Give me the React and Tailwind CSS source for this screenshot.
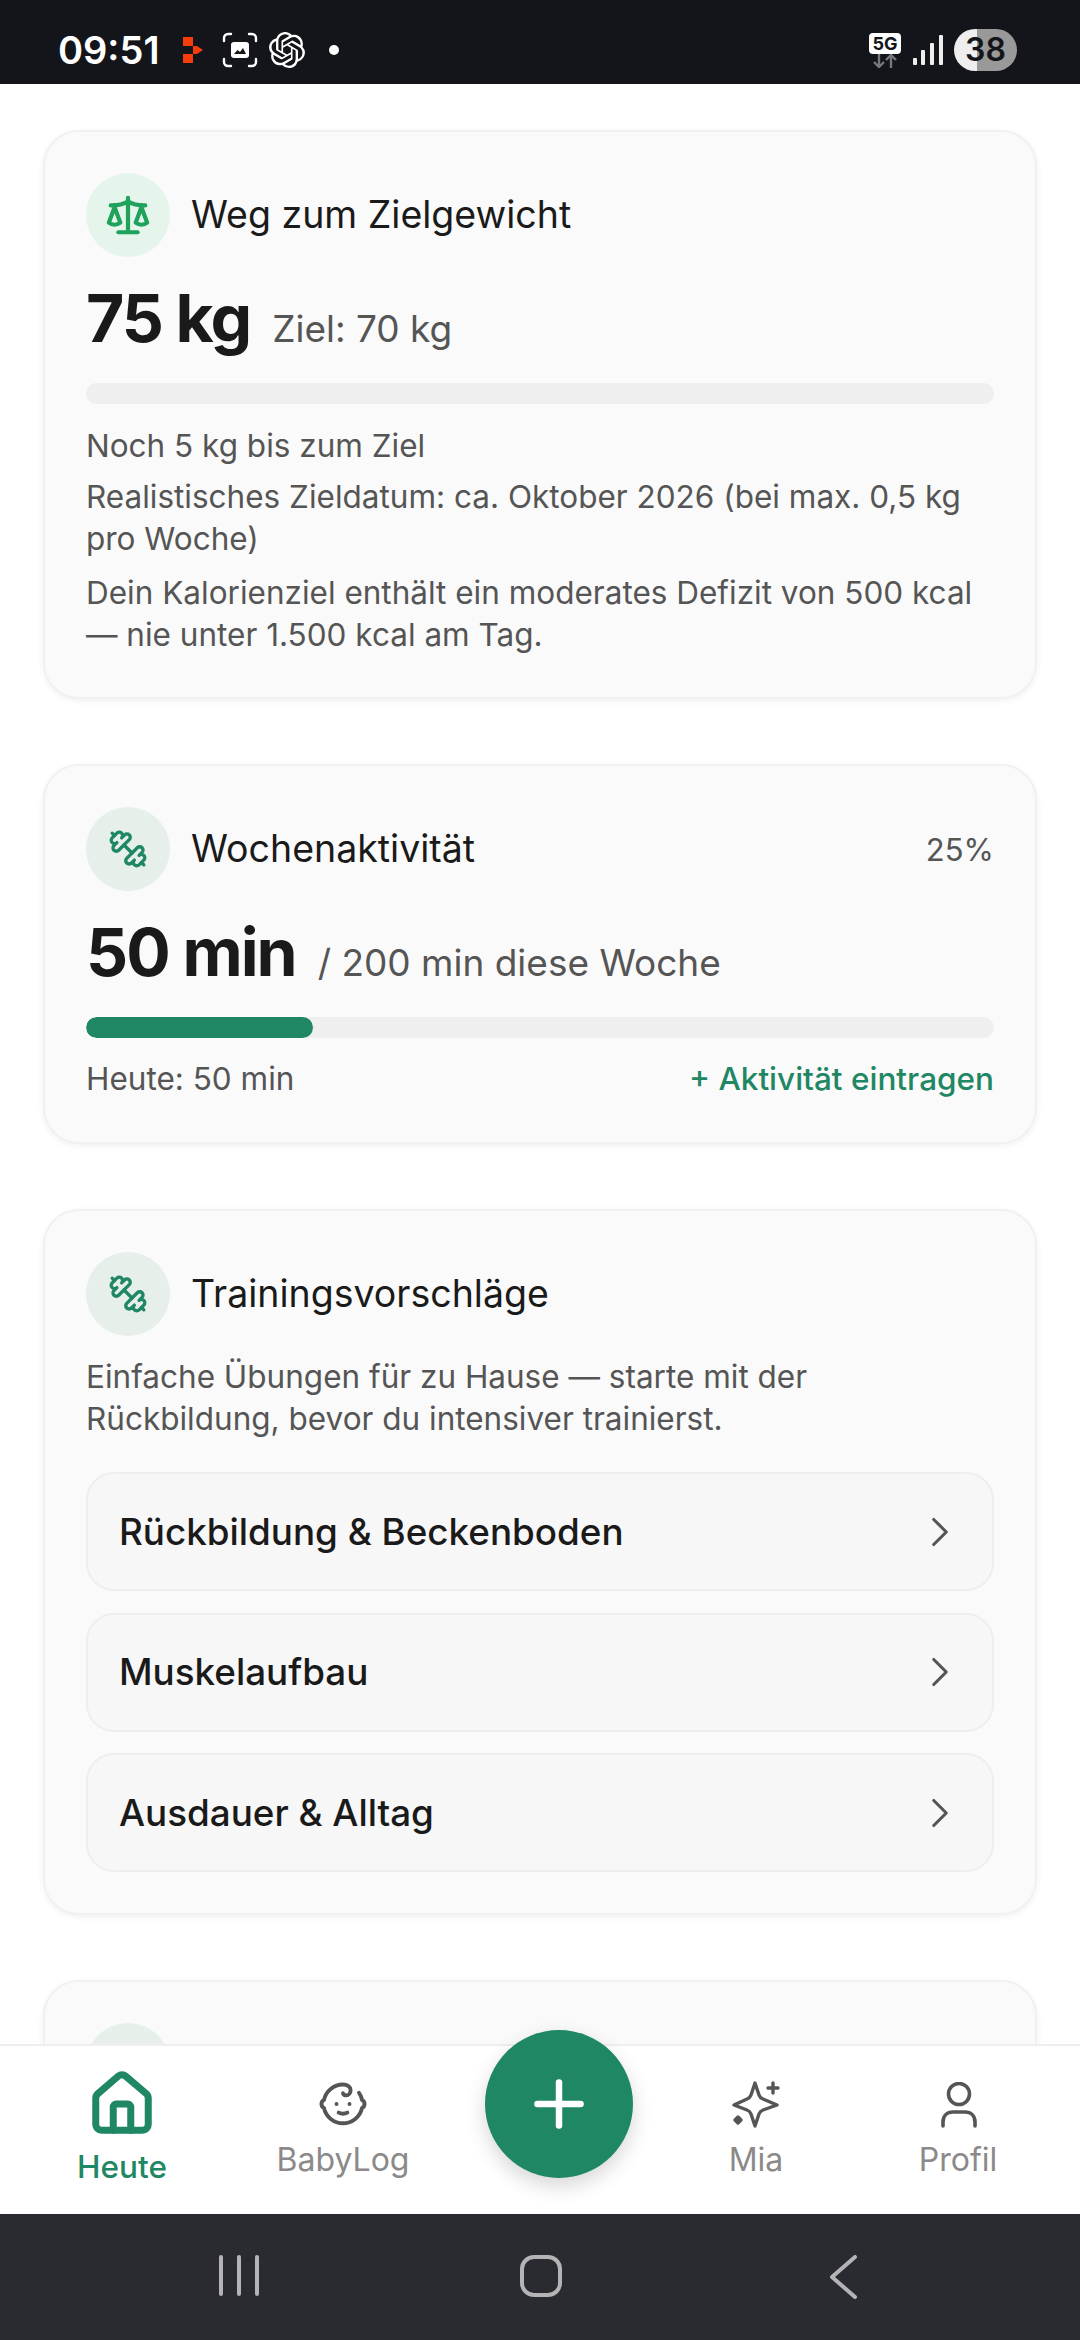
import React from 'react';
import { Scale, Dumbbell, ChevronRight, House, Baby, Plus } from 'lucide-react';
import { SiOpenai } from 'react-icons/si';

function StatusBar() {
  return (
    <div className="h-[84px] shrink-0 bg-[#14151a] flex items-center text-white pl-[58px] pr-[63px] pt-[16px]">
      <span className="text-[38px] font-semibold leading-none w-[125px]">09:51</span>
      <svg width="20" height="26" viewBox="0 0 20 26" className="shrink-0">
        <path d="M0 0h10v9H0zM0 17h10v9H0zM10 9h4l6 4-6 4h-4z" fill="#f43c0c" />
      </svg>
      <svg width="36" height="36" viewBox="0 0 36 36" fill="none" className="shrink-0 ml-[19px]">
        <path d="M9 2H6a4 4 0 0 0-4 4v3M27 2h3a4 4 0 0 1 4 4v3M2 27v3a4 4 0 0 0 4 4h3M34 27v3a4 4 0 0 1-4 4h-3" stroke="#fff" strokeWidth="2.4" strokeLinecap="round" />
        <rect x="9" y="10" width="18" height="16" rx="3" fill="#fff" />
        <path d="M12 22l3.500-4 2.500 2 3-4 3 6z" fill="#14151a" />
      </svg>
      <SiOpenai className="shrink-0 ml-[11px] text-white" size={36} />
      <span className="w-[10px] h-[10px] rounded-full bg-white ml-[24px]"></span>
      <div className="flex-1"></div>
      <div className="flex flex-col items-center w-[32px]">
        <span className="w-[32px] h-[21px] bg-white rounded-[4px] text-[#14151a] text-[18px] font-bold leading-[21px] text-center">5G</span>
        <svg width="28" height="14" viewBox="0 0 28 14" fill="none" stroke="#77787c" strokeWidth="2.4">
          <path d="M8 0v12M3 8l5 5 5-5M20 14V2M15 6l5-5 5 5" />
        </svg>
      </div>
      <svg width="30" height="30" viewBox="0 0 30 30" fill="#eee" className="ml-[12px] shrink-0">
        <rect x="0" y="23" width="4" height="7" rx="1" />
        <rect x="8" y="15" width="4" height="15" rx="1" />
        <rect x="17" y="8" width="4" height="22" rx="1" />
        <rect x="26" y="0" width="4" height="30" rx="1" />
      </svg>
      <div className="ml-[11px] w-[63px] h-[42px] rounded-full overflow-hidden bg-[linear-gradient(90deg,#eeeeee_37%,#999999_37%)] flex items-center justify-center">
        <span className="text-[32px] font-semibold text-[#14151a] leading-none">38</span>
      </div>
    </div>
  );
}

function IconCircle({ icon: Icon, tint, color, size, stroke, flip }) {
  return (
    <div className={`w-[84px] h-[84px] rounded-full flex items-center justify-center shrink-0 ${tint} ${color}`}>
      <Icon size={size} strokeWidth={stroke} className={flip ? '-scale-x-100' : ''} />
    </div>
  );
}

function Card({ className = '', children }) {
  return (
    <div className={`mx-[43px] bg-[#fafafa] border-2 border-[#f1f1f1] rounded-[36px] px-[41px] pt-[41px] shadow-[0_2px_6px_rgba(0,0,0,0.06)] ${className}`}>
      {children}
    </div>
  );
}

function CardHead({ icon = Dumbbell, title, right, tint = 'bg-[#e6efea]', color = 'text-[#1f8763]', size = 40, stroke = 2, flip = true }) {
  return (
    <div className="flex items-center">
      <IconCircle icon={icon} tint={tint} color={color} size={size} stroke={stroke} flip={flip} />
      <h2 className="ml-[21px] text-[37.5px] font-normal text-[#1a1a1a] leading-none flex-1">{title}</h2>
      {right && <span className="text-[31px] text-[#555] leading-none">{right}</span>}
    </div>
  );
}

function Metric({ value, rest }) {
  return (
    <div className="flex items-baseline mt-[17px] h-[88px]">
      <span className="text-[66px] font-bold tracking-[-0.03em] text-[#1a1a1a] leading-[88px]">{value}</span>
      <span className="ml-[22px] text-[37px] text-[#555] leading-none">{rest}</span>
    </div>
  );
}

function Bar({ pct }) {
  return (
    <div className="h-[21px] rounded-full bg-[#efefef] mt-[21px] overflow-hidden">
      {pct > 0 && <div className="h-full rounded-full bg-[#1f8763]" style={{ width: `${pct}%` }}></div>}
    </div>
  );
}

function TrainingRow({ label }) {
  return (
    <div className="h-[119px] bg-[#f7f7f7] border-2 border-[#eeeeee] rounded-[28px] flex items-center justify-between pl-[31px] pr-[27px]">
      <span className="text-[36.8px] font-medium text-[#1a1a1a]">{label}</span>
      <ChevronRight size={50} strokeWidth={1.5} className="text-[#555]" />
    </div>
  );
}

function MiaIcon() {
  return (
    <svg width="48" height="48" viewBox="0 0 48 48" fill="none" stroke="#575454" strokeWidth="3.4" strokeLinecap="round" strokeLinejoin="round" className="mb-[4px]">
      <path d="M23 3l4 12c.7 2 2 3.300 4 4l14 6-14 5c-2 .7-3.300 2-4 4l-4 12-4-12c-.7-2-2-3.300-4-4L2 25l13-6c2-.7 3.300-2 4-4z" />
      <path d="M41 3v10M36 8h10" />
      <path d="M6 37l3 3-3 3-3-3z" fill="#575454" />
    </svg>
  );
}

function ProfileIcon() {
  return (
    <svg width="36" height="46" viewBox="0 0 36 46" fill="none" stroke="#575454" strokeWidth="3.600" strokeLinecap="round" className="mb-[4px] ml-[2px]">
      <circle cx="18" cy="12" r="10.500" />
      <path d="M2 44v-4c0-6 4-10 10-10h12c6 0 10 4 10 10v4" />
    </svg>
  );
}

function Tab({ width, icon, label, active, labelGap }) {
  return (
    <div className={`${width} flex flex-col items-center`}>
      <div className="h-[62px] flex items-end justify-center">{icon}</div>
      <span className={`leading-none ${labelGap} ${active ? 'text-[31.5px] font-medium text-[#1f8763]' : 'text-[32px] font-normal text-[#8b8989]'}`}>{label}</span>
    </div>
  );
}

function BottomNav() {
  return (
    <div className="h-[170px] shrink-0 bg-white border-t-2 border-[#eeeeee] relative flex items-start pt-[24px]">
      <Tab width="w-[244px]" icon={<House size={70} strokeWidth={2.4} className="text-[#1f8763] -mb-[7px]" />} label="Heute" active labelGap="mt-[19px]" />
      <Tab width="w-[198px]" icon={<Baby size={52} strokeWidth={1.8} className="text-[#575454] mb-[2px]" />} label="BabyLog" labelGap="mt-[12px]" />
      <div className="w-[232px]"></div>
      <Tab width="w-[164px]" icon={<MiaIcon />} label="Mia" labelGap="mt-[12px]" />
      <Tab width="w-[240px]" icon={<ProfileIcon />} label="Profil" labelGap="mt-[12px]" />
      <button className="absolute left-[485px] -top-[16px] w-[148px] h-[148px] rounded-full bg-[#1f8763] flex items-center justify-center text-white shadow-[0_8px_20px_rgba(0,0,0,0.16)]">
        <Plus size={74} strokeWidth={2.1} />
      </button>
    </div>
  );
}

function SystemNav() {
  return (
    <div className="h-[126px] shrink-0 bg-[#2a2b30] flex items-start pt-[41px]">
      <div className="flex gap-[14px] ml-[219px]">
        <span className="w-[4px] h-[41px] rounded-full bg-[#b4b4b6]"></span>
        <span className="w-[4px] h-[41px] rounded-full bg-[#b4b4b6]"></span>
        <span className="w-[4px] h-[41px] rounded-full bg-[#b4b4b6]"></span>
      </div>
      <div className="w-[42px] h-[42px] border-[4px] border-[#b4b4b6] rounded-[14px] ml-[261px]"></div>
      <svg width="28" height="44" viewBox="0 0 28 44" fill="none" stroke="#b4b4b6" strokeWidth="4" strokeLinecap="round" strokeLinejoin="round" className="ml-[267px]">
        <path d="M26 2L3 22l23 20" />
      </svg>
    </div>
  );
}

export default function App() {
  return (
    <div className="w-[1080px] h-[2340px] flex flex-col overflow-hidden bg-white font-['Inter',sans-serif]">
      <StatusBar />
      <div className="flex-1 overflow-hidden pt-[46px]">
        <Card className="pb-[41px]">
          <CardHead icon={Scale} title="Weg zum Zielgewicht" tint="bg-[#e5f5ec]" color="text-[#1fa35c]" size={46} stroke={2.2} flip={false} />
          <Metric value="75 kg" rest="Ziel: 70 kg" />
          <Bar pct={0} />
          <div className="mt-[21px] text-[31.5px] leading-[42px] text-[#555]">
            <p>Noch 5 kg bis zum Ziel</p>
            <p className="mt-[9px]">Realistisches Zieldatum: ca. Oktober 2026 (bei max. 0,5 kg pro Woche)</p>
            <p className="mt-[12px]">Dein Kalorienziel enthält ein moderates Defizit von 500 kcal — nie unter 1.500 kcal am Tag.</p>
          </div>
        </Card>
        <Card className="mt-[65px] pb-[42px]">
          <CardHead title="Wochenaktivität" right="25%" />
          <Metric value="50 min" rest="/ 200 min diese Woche" />
          <Bar pct={25} />
          <div className="mt-[20px] flex justify-between items-center leading-[42px]">
            <span className="text-[31.5px] text-[#555]">Heute: 50 min</span>
            <span className="text-[31.5px] font-medium text-[#1f8763]">+ Aktivität eintragen</span>
          </div>
        </Card>
        <Card className="mt-[65px] pb-[41px]">
          <CardHead title="Trainingsvorschläge" />
          <p className="mt-[20px] text-[31.5px] leading-[42px] text-[#555]">Einfache Übungen für zu Hause — starte mit der Rückbildung, bevor du intensiver trainierst.</p>
          <div className="mt-[32px] flex flex-col gap-[21.5px]">
            <TrainingRow label="Rückbildung & Beckenboden" />
            <TrainingRow label="Muskelaufbau" />
            <TrainingRow label="Ausdauer & Alltag" />
          </div>
        </Card>
        <Card className="mt-[65px] pb-[43px]">
          <CardHead title="" />
        </Card>
      </div>
      <BottomNav />
      <SystemNav />
    </div>
  );
}
